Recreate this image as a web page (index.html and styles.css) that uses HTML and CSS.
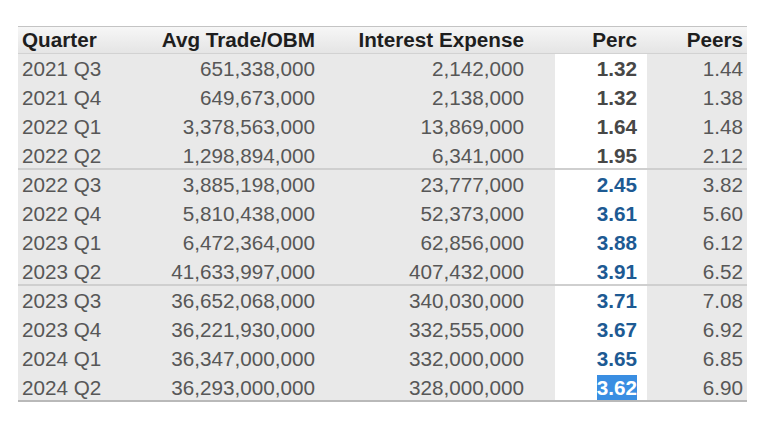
FILE: index.html
```html
<!DOCTYPE html>
<html>
<head>
<meta charset="utf-8">
<link rel="stylesheet" href="styles.css">
</head>
<body>
<table class="grid">
  <colgroup>
    <col class="c-q"><col class="c-avg"><col class="c-int"><col class="c-perc"><col class="c-peers">
  </colgroup>
  <thead>
    <tr>
      <th class="left">Quarter</th>
      <th>Avg Trade/OBM</th>
      <th class="p-int">Interest Expense</th>
      <th class="p-perc">Perc</th>
      <th class="p-peers">Peers</th>
    </tr>
  </thead>
  <tbody>
    <tr><td class="left">2021 Q3</td><td>651,338,000</td><td class="p-int">2,142,000</td><td class="perc">1.32</td><td class="p-peers">1.44</td></tr>
    <tr><td class="left">2021 Q4</td><td>649,673,000</td><td class="p-int">2,138,000</td><td class="perc">1.32</td><td class="p-peers">1.38</td></tr>
    <tr><td class="left">2022 Q1</td><td>3,378,563,000</td><td class="p-int">13,869,000</td><td class="perc">1.64</td><td class="p-peers">1.48</td></tr>
    <tr class="end"><td class="left">2022 Q2</td><td>1,298,894,000</td><td class="p-int">6,341,000</td><td class="perc">1.95</td><td class="p-peers">2.12</td></tr>
    <tr><td class="left">2022 Q3</td><td>3,885,198,000</td><td class="p-int">23,777,000</td><td class="perc blue">2.45</td><td class="p-peers">3.82</td></tr>
    <tr><td class="left">2022 Q4</td><td>5,810,438,000</td><td class="p-int">52,373,000</td><td class="perc blue">3.61</td><td class="p-peers">5.60</td></tr>
    <tr><td class="left">2023 Q1</td><td>6,472,364,000</td><td class="p-int">62,856,000</td><td class="perc blue">3.88</td><td class="p-peers">6.12</td></tr>
    <tr class="end"><td class="left">2023 Q2</td><td>41,633,997,000</td><td class="p-int">407,432,000</td><td class="perc blue">3.91</td><td class="p-peers">6.52</td></tr>
    <tr><td class="left">2023 Q3</td><td>36,652,068,000</td><td class="p-int">340,030,000</td><td class="perc blue">3.71</td><td class="p-peers">7.08</td></tr>
    <tr><td class="left">2023 Q4</td><td>36,221,930,000</td><td class="p-int">332,555,000</td><td class="perc blue">3.67</td><td class="p-peers">6.92</td></tr>
    <tr><td class="left">2024 Q1</td><td>36,347,000,000</td><td class="p-int">332,000,000</td><td class="perc blue">3.65</td><td class="p-peers">6.85</td></tr>
    <tr class="last"><td class="left">2024 Q2</td><td>36,293,000,000</td><td class="p-int">328,000,000</td><td class="perc"><span class="sel">3.62</span></td><td class="p-peers">6.90</td></tr>
  </tbody>
</table>
</body>
</html>
```

FILE: styles.css
```css
html, body {
  margin: 0;
  padding: 0;
  background: #ffffff;
}

body {
  padding: 26px 0 0 18px;
  font-family: "Liberation Sans", Arial, sans-serif;
}

.grid {
  border-collapse: collapse;
  table-layout: fixed;
  width: 729px;
  font-size: 20.7px;
}

.c-q { width: 132px; }
.c-avg { width: 180px; }
.c-int { width: 225px; }
.c-perc { width: 92px; }
.c-peers { width: 100px; }

th, td {
  padding: 0 15px 0 0;
  text-align: right;
  white-space: nowrap;
  line-height: 29px;
  height: 29px;
}

th {
  height: 28px;
  line-height: 28px;
  font-weight: bold;
  color: #1e1e1e;
  background: linear-gradient(#f7f7f7, #e4e4e4);
  box-shadow: inset 0 1px 0 #c4c4c4, inset 0 -1px 0 #d2d2d2;
}

td {
  color: #575757;
  background: #e9e9e9;
}

.left {
  text-align: left;
  padding-left: 4px;
}

.p-int { padding-right: 31px; }
.p-perc { padding-right: 10px; }
.p-peers { padding-right: 4px; }

td.perc {
  background: #ffffff;
  font-weight: bold;
  color: #474747;
  padding-right: 10px;
}

td.blue {
  color: #1d5a93;
}

tr.end td {
  box-shadow: inset 0 -2px 0 #cfcfcf;
}

tr.last td {
  box-shadow: inset 0 -2px 0 #b9b9b9;
}

.sel {
  background: #3a8ee2;
  color: #ffffff;
  padding: 1px 0;
}
```
